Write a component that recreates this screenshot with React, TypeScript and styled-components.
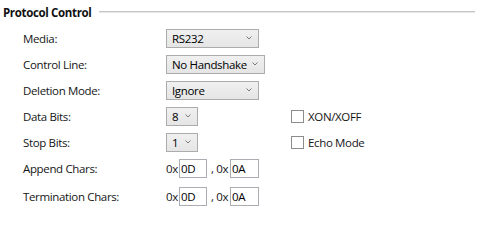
import React from "react";
import styled, { createGlobalStyle } from "styled-components";

const Global = createGlobalStyle`
  html, body { margin: 0; padding: 0; background: #ffffff; }
  body {
    font-family: "Open Sans", "Noto Sans", sans-serif;
    font-size: 11.5px;
    letter-spacing: -0.35px;
    color: #111;
  }
`;

const Page = styled.div`
  width: 500px;
  height: 230px;
  box-sizing: border-box;
  padding: 0 25px 0 3px;
`;

const Header = styled.div`
  display: flex;
  align-items: center;
  height: 24px;
  gap: 8px;
`;

const Title = styled.div`
  font-weight: 700;
  font-size: 11.5px;
  color: #111;
  white-space: nowrap;
`;

const Rule = styled.div`
  flex: 1;
  height: 0;
  border-top: 1px solid #c6c6c6;
  border-bottom: 1px solid #e6e6e6;
  margin-top: -1px;
`;

const Form = styled.div`
  display: grid;
  grid-template-columns: 143px 125px auto;
  grid-template-rows: repeat(6, 26px) 30px;
  align-items: center;
  padding-left: 20px;
  margin-top: 1px;
`;

const Label = styled.div`
  color: #151515;
  white-space: nowrap;
`;

const Combo = styled.div<{ $w: number }>`
  width: ${(p) => p.$w}px;
  height: 19px;
  box-sizing: border-box;
  border: 1px solid #acacac;
  background: linear-gradient(#f0f0f0, #e5e5e5);
  display: flex;
  align-items: center;
  justify-content: space-between;
  padding: 0 6px 0 5px;
  color: #000;
`;

const Chevron = () => (
  <svg width="6" height="4" viewBox="0 0 6 4">
    <path d="M0.5 0.5 L3 3 L5.5 0.5" fill="none" stroke="#7a7a7a" strokeWidth="1" />
  </svg>
);

const HexRow = styled.div`
  display: flex;
  align-items: center;
  color: #151515;
  white-space: nowrap;
`;

const HexBox = styled.div<{ $w: number }>`
  width: ${(p) => p.$w}px;
  height: 19px;
  box-sizing: border-box;
  border: 1px solid #abadb3;
  background: #fff;
  padding-left: 1px;
  display: flex;
  align-items: center;
  color: #000;
  margin-left: 1px;
`;

const Sep = styled.span`
  margin: 0 1px 0 4px;
`;

const Check = styled.label`
  display: flex;
  align-items: center;
  gap: 4px;
  color: #151515;
  white-space: nowrap;
`;

const Box = styled.span`
  width: 13px;
  height: 13px;
  box-sizing: border-box;
  border: 1px solid #8c8c8c;
  background: #fff;
  display: inline-block;
`;

const Empty = styled.div``;

export default function App() {
  return (
    <>
      <Global />
      <Page>
        <Header>
          <Title>Protocol Control</Title>
          <Rule />
        </Header>
        <Form>
          <Label>Media:</Label>
          <Combo $w={93}>RS232<Chevron /></Combo>
          <Empty />

          <Label>Control Line:</Label>
          <Combo $w={99}>No Handshake<Chevron /></Combo>
          <Empty />

          <Label>Deletion Mode:</Label>
          <Combo $w={93}>Ignore<Chevron /></Combo>
          <Empty />

          <Label>Data Bits:</Label>
          <Combo $w={32}>8<Chevron /></Combo>
          <Check><Box />XON/XOFF</Check>

          <Label>Stop Bits:</Label>
          <Combo $w={32}>1<Chevron /></Combo>
          <Check><Box />Echo Mode</Check>

          <Label>Append Chars:</Label>
          <HexRow>0x<HexBox $w={28}>0D</HexBox><Sep>, 0x</Sep><HexBox $w={29}>0A</HexBox></HexRow>
          <Empty />

          <Label>Termination Chars:</Label>
          <HexRow>0x<HexBox $w={28}>0D</HexBox><Sep>, 0x</Sep><HexBox $w={29}>0A</HexBox></HexRow>
          <Empty />
        </Form>
      </Page>
    </>
  );
}
